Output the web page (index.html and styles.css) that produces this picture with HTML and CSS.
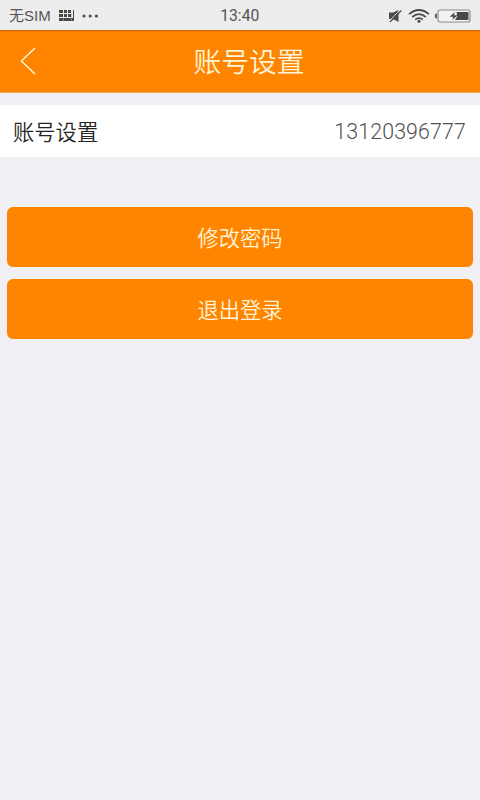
FILE: index.html
```html
<!DOCTYPE html>
<html lang="zh-CN">
<head>
<meta charset="utf-8">
<title>账号设置</title>
<link rel="stylesheet" href="styles.css">
</head>
<body>
<div class="status">
  <div class="status-left">
    <span class="carrier">无SIM</span>
    <svg class="keyboard" width="16" height="11" viewBox="0 0 16 11">
      <path fill="#484848" d="M0 0h4v3H0zM5 0h3v3H5zM9 0h3v3H9zM14 0h1v8h-1zM0 4h4v3H0zM5 4h3v3H5zM9 4h3v3H9zM0 8h15v3H0z"/>
      <path stroke="#aaa" stroke-width=".6" d="M4.5 8v3M12.5 3v8"/>
    </svg>
    <svg class="dots" width="17" height="4" viewBox="0 0 17 4" fill="#505050">
      <circle cx="2" cy="2" r="1.6"/><circle cx="8.2" cy="2" r="1.6"/><circle cx="14.4" cy="2" r="1.6"/>
    </svg>
  </div>
  <span class="clock">13:40</span>
  <div class="status-right">
    <svg width="13" height="12" viewBox="0 0 13 12">
      <path fill="#4c4c4c" d="M0 2.5h4L9.5 0v12L4 9H0z"/>
      <path stroke="#ededed" stroke-width=".9" d="M.2 11 11 .1"/>
      <path stroke="#4c4c4c" stroke-width="1.3" d="M1 12 12.3.5"/>
    </svg>
    <svg class="wifi" width="22" height="14" viewBox="0 0 22 14" fill="none" stroke="#484848" stroke-width="1.7">
      <path d="M1 5.1Q11-3.1 21 5.1M4.2 8Q11 2.2 17.8 8M7.2 10.7Q11 7.5 14.8 10.7"/>
      <circle cx="11" cy="12.2" r="1.5" fill="#484848" stroke="none"/>
    </svg>
    <svg class="battery" width="36" height="14" viewBox="0 0 36 14">
      <rect x="3" y="1" width="32" height="12" rx="2" fill="#f3f3f3" stroke="#8a8a8a" stroke-width="1.2"/>
      <path fill="#555" d="M0 5.4q0-1 1.8-1v5q-1.8 0-1.8-1z"/>
      <path fill="#484848" d="M21.5 3H33.5v8H20l2.2-3.5z"/>
      <path fill="#484848" d="m19.7 3-5 4.7h3.6l-1 3.3 5.5-4.8h-3.7z"/>
    </svg>
  </div>
</div>
<header class="navbar">
  <svg class="back" width="16" height="28" viewBox="0 0 16 28" fill="none" stroke="#fff4d8" stroke-width="1.5"><path d="M15 1 1.4 14 15 27"/></svg>
  <h1>账号设置</h1>
</header>
<main>
  <div class="row"><span class="label">账号设置</span><span class="phone">13120396777</span></div>
  <div class="actions">
    <button>修改密码</button>
    <button>退出登录</button>
  </div>
</main>
</body>
</html>
```

FILE: styles.css
```css
* { box-sizing: border-box; }
body {
  margin: 0;
  min-height: 800px;
  background: #efeff4;
  color: #242424;
  font-family: "Noto Sans CJK SC", sans-serif;
}
.status {
  height: 30px;
  padding: 0 9.5px 0 9px;
  display: grid;
  grid-template-columns: 1fr auto 1fr;
  align-items: center;
  background: #ededed;
  color: #555;
  font: 15.7px/31px Roboto, "Noto Sans CJK SC", sans-serif;
}
.status-left, .status-right { display: flex; align-items: center; height: 30px; }
.carrier { font-family: "Liberation Sans", "Noto Sans CJK SC", sans-serif; font-size: 15px; }
.keyboard { margin: 0 0 0 8.5px; }
.dots { margin: 1px 0 0 6.5px; }
.status-right { justify-content: flex-end; }
.wifi { margin-left: 6px; }
.battery { margin-left: 4.5px; }
.navbar {
  height: 63px;
  padding: 0 20px;
  display: grid;
  grid-template-columns: 55px 1fr 37px;
  align-items: center;
  background: #ff8400;
  border-top: 1px solid #d36e08;
  border-bottom: 1px solid #e9a55a;
  box-shadow: inset 0 1px #ee7c04;
}
.back { margin-top: -1px; }
h1 {
  margin: 0;
  padding-bottom: 4px;
  color: #fff4d8;
  font-size: 27.8px;
  font-weight: 350;
  line-height: 40px;
  text-align: center;
}
.row {
  height: 52px;
  margin-top: 12px;
  padding: 0 14px 0 13px;
  display: flex;
  align-items: center;
  justify-content: space-between;
  background: #fff;
  font-size: 21.3px;
}
.label {
  padding-bottom: 2px;
  font-weight: 350;
}
.phone {
  padding-top: 1px;
  color: #505050;
  font-family: Roboto, sans-serif;
  font-weight: 300;
  letter-spacing: .16px;
}
.actions {
  display: flex;
  flex-direction: column;
  gap: 12px;
  padding: 50px 7px 0;
}
button {
  height: 60px;
  padding: 0 0 2px;
  border: 0;
  border-radius: 6px;
  background: #ff8400;
  color: #fff4d8;
  font: 350 21.3px "Noto Sans CJK SC", sans-serif;
}
```
